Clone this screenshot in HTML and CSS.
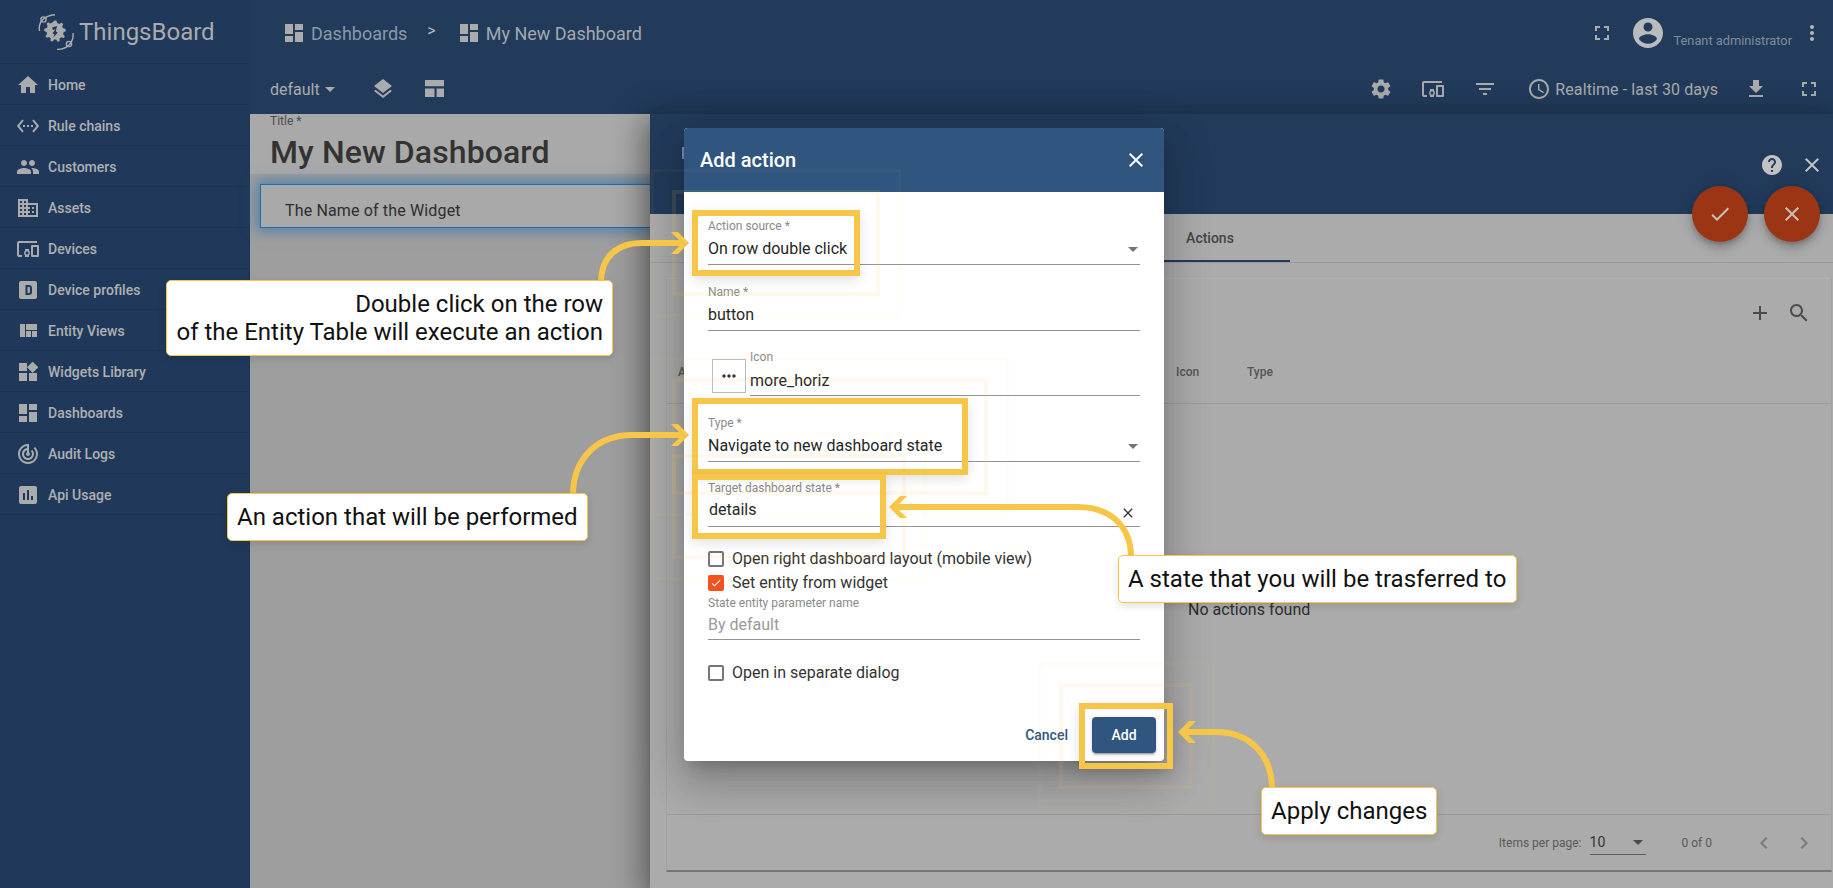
FILE: index.html
```html
<!DOCTYPE html>
<html lang="en">
<head>
<meta charset="utf-8">
<title>ThingsBoard - Add action</title>
<link rel="stylesheet" href="styles.css">
</head>
<body>
<svg class="defs" width="0" height="0" aria-hidden="true">
  <symbol id="i-dash" viewBox="3 3 18 18"><path d="M3 13h8V3H3zm0 8h8v-6H3zm10 0h8V11h-8zm0-18v6h8V3z"/></symbol>
  <symbol id="i-full" viewBox="0 0 24 24"><path d="M7 14H5v5h5v-2H7zm-2-4h2V7h3V5H5zm12 7h-3v2h5v-5h-2zM14 5v2h3v3h2V5z"/></symbol>
  <symbol id="i-devices" viewBox="0 0 24 24"><path d="M3 6h18V4H3c-1.100 0-2 .9-2 2v12c0 1.100.9 2 2 2h3v-2H3zm10 6H9v1.780c-.61.550-1 1.330-1 2.220s.39 1.670 1 2.220V20h4v-1.780c.61-.55 1-1.340 1-2.220s-.39-1.670-1-2.220zm-2 5.500c-.83 0-1.500-.67-1.500-1.500s.67-1.500 1.500-1.500 1.500.67 1.500 1.500-.67 1.500-1.500 1.500zM22 8h-6c-.5 0-1 .5-1 1v10c0 .5.5 1 1 1h6c.5 0 1-.5 1-1V9c0-.5-.5-1-1-1zm-1 10h-4v-8h4z"/></symbol>
  <symbol id="i-close" viewBox="0 0 24 24"><path d="M19 6.410 17.590 5 12 10.590 6.410 5 5 6.410 10.590 12 5 17.590 6.410 19 12 13.410 17.590 19 19 17.590 13.410 12z"/></symbol>
  <symbol id="i-logo" viewBox="0 0 36 36">
    <path class="orbit" d="M1.500 17C0 8 6 1.500 17 .7"/><circle class="orbit" cx="5.500" cy="5.500" r="2.600"/>
    <path class="orbit" d="M35 19C36 28 30 35 19 35.500"/><circle class="orbit" cx="31" cy="30" r="2.600"/>
    <path transform="translate(-1.500 0)" d="M18 6.500l2 .2.800 2.400 2 .8 2.300-1.200 1.600 1.400-1 2.400.9 1.800 2.500.7.200 2.200-2.300 1-.4 2.100 1.800 1.900-1.200 1.800-2.500-.7-1.600 1.300.1 2.600-2.100.6-1.400-2.200-2.100-.1-1.500 2.100-2.100-.7.200-2.600-1.700-1.300-2.400.8-1.200-1.900 1.700-1.900-.5-2.100-2.400-.9.100-2.200 2.500-.8.800-1.900-1.100-2.300 1.600-1.500 2.300 1.100 1.900-.9z"/>
    <path class="bolt" transform="translate(-1.500 0)" d="M20.500 12l-5 1.500 1 2.500 2.500-.8-3 4 1.800 1-1 3.300 4.500-5-2-1z"/>
  </symbol>
</svg>

<div class="app">
  <aside class="sidebar">
    <div class="logo">
      <svg class="logo-icon"><use href="#i-logo"/></svg>
      <span>ThingsBoard</span>
    </div>
    <nav class="menu">
      <a class="menu-item"><svg class="mi" viewBox="0 0 24 24"><path d="M10 20v-6h4v6h5v-8h3L12 3 2 12h3v8z"/></svg>Home</a>
      <a class="menu-item"><svg class="mi" viewBox="0 0 24 24"><path d="M7.770 6.760 6.230 5.480.830 12l5.400 6.520 1.540-1.280L3.420 12zM7 13h2v-2H7zm10-2h-2v2h2zm-6 2h2v-2h-2zm6.770-7.520-1.540 1.280L20.580 12l-4.350 5.240 1.540 1.280L23.170 12z"/></svg>Rule chains</a>
      <a class="menu-item"><svg class="mi" viewBox="0 0 24 24"><path d="M16 11c1.660 0 2.990-1.340 2.990-3S17.660 5 16 5s-3 1.340-3 3 1.340 3 3 3zm-8 0c1.660 0 2.990-1.340 2.990-3S9.660 5 8 5 5 6.340 5 8s1.340 3 3 3zm0 2c-2.330 0-7 1.170-7 3.500V19h14v-2.500C15 14.170 10.330 13 8 13zm8 0c-.29 0-.62.020-.97.050C16.190 13.890 17 15.020 17 16.500V19h6v-2.500c0-2.330-4.670-3.500-7-3.500z"/></svg>Customers</a>
      <a class="menu-item"><svg class="mi" viewBox="0 0 24 24"><path d="M12 7V3H2v18h20V7zM6 19H4v-2h2zm0-4H4v-2h2zm0-4H4V9h2zm0-4H4V5h2zm4 12H8v-2h2zm0-4H8v-2h2zm0-4H8V9h2zm0-4H8V5h2zm10 12h-8v-2h2v-2h-2v-2h2v-2h-2V9h8zm-2-8h-2v2h2zm0 4h-2v2h2z"/></svg>Assets</a>
      <a class="menu-item"><svg class="mi"><use href="#i-devices"/></svg>Devices</a>
      <a class="menu-item"><svg class="mi" viewBox="0 0 24 24"><path fill-rule="evenodd" d="M5 3h14c1.100 0 2 .9 2 2v14c0 1.100-.9 2-2 2H5c-1.100 0-2-.9-2-2V5c0-1.100.9-2 2-2zm4.500 4v10H13c1.700 0 3-1.300 3-3v-4c0-1.700-1.300-3-3-3zm2 2H13c.5 0 .9.400.9 1v4c0 .6-.4 1-.9 1h-1.500z"/></svg>Device profiles</a>
      <a class="menu-item"><svg class="mi" viewBox="0 0 24 24"><path d="M10 18h5v-6h-5zm-6 0h5V5H4zm12 0h5v-6h-5zM10 5v6h11V5z"/></svg>Entity Views</a>
      <a class="menu-item"><svg class="mi" viewBox="0 0 24 24"><path d="M13 13v8h8v-8zM3 21h8v-8H3zM3 3v8h8V3zm13.660-1.310L11 7.340 16.660 13l5.660-5.660z"/></svg>Widgets Library</a>
      <a class="menu-item"><svg class="mi" viewBox="0 0 24 24"><path d="M3 13h8V3H3zm0 8h8v-6H3zm10 0h8V11h-8zm0-18v6h8V3z"/></svg>Dashboards</a>
      <a class="menu-item"><svg class="mi" viewBox="0 0 24 24"><path d="M19.070 4.930l-1.410 1.410C19.100 7.790 20 9.790 20 12c0 4.420-3.580 8-8 8s-8-3.580-8-8c0-4.080 3.050-7.440 7-7.930v2.020C8.160 6.570 6 9.030 6 12c0 3.310 2.690 6 6 6s6-2.690 6-6c0-1.660-.67-3.160-1.760-4.240l-1.410 1.410C15.550 9.900 16 10.900 16 12c0 2.210-1.790 4-4 4s-4-1.790-4-4c0-1.860 1.280-3.410 3-3.860v2.140c-.6.350-1 .98-1 1.720 0 1.100.9 2 2 2s2-.9 2-2c0-.74-.4-1.380-1-1.720V2h-1C6.480 2 2 6.480 2 12s4.480 10 10 10 10-4.480 10-10c0-2.760-1.120-5.260-2.930-7.070z"/></svg>Audit Logs</a>
      <a class="menu-item"><svg class="mi" viewBox="0 0 24 24"><path d="M19 3H5c-1.100 0-2 .9-2 2v14c0 1.100.9 2 2 2h14c1.100 0 2-.9 2-2V5c0-1.100-.9-2-2-2zM9 17H7v-7h2zm4 0h-2V7h2zm4 0h-2v-4h2z"/></svg>Api Usage</a>
    </nav>
  </aside>

  <div class="main">
    <header class="topbar">
      <div class="crumbs">
        <svg class="crumb-icon"><use href="#i-dash"/></svg>
        <span class="crumb crumb-dim">Dashboards</span>
        <span class="crumb-sep">&gt;</span>
        <svg class="crumb-icon"><use href="#i-dash"/></svg>
        <span class="crumb">My New Dashboard</span>
      </div>
      <div class="user">
        <svg class="ico18"><use href="#i-full"/></svg>
        <svg class="avatar" viewBox="2 2 20 20"><path d="M12 2C6.480 2 2 6.480 2 12s4.480 10 10 10 10-4.480 10-10S17.520 2 12 2zm0 3c1.660 0 3 1.340 3 3s-1.340 3-3 3-3-1.340-3-3 1.340-3 3-3zm0 14.200c-2.500 0-4.710-1.280-6-3.220.030-1.990 4-3.080 6-3.080 1.990 0 5.970 1.090 6 3.080-1.290 1.940-3.500 3.220-6 3.220z"/></svg>
        <span class="role">Tenant administrator</span>
        <svg class="more" viewBox="0 0 24 24"><path d="M12 8c1.100 0 2-.9 2-2s-.9-2-2-2-2 .9-2 2 .9 2 2 2zm0 2c-1.100 0-2 .9-2 2s.9 2 2 2 2-.9 2-2-.9-2-2-2zm0 6c-1.100 0-2 .9-2 2s.9 2 2 2 2-.9 2-2-.9-2-2-2z"/></svg>
      </div>
    </header>

    <div class="toolbar">
      <div class="tools-left">
        <span class="state">default<i class="caret"></i></span>
        <svg class="ico24 t-layers" viewBox="0 0 24 24"><path d="m11.990 18.540-7.370-5.730L3 14.070l9 7 9-7-1.630-1.270zM12 16l7.360-5.730L21 9l-9-7-9 7 1.630 1.270z"/></svg>
        <svg class="ico24 t-layout" viewBox="3 3 18 18"><path d="M3 3h18v6H3zM3 11h9v8H3zM14 11h7v8h-7z"/></svg>
      </div>
      <div class="tools-right">
        <svg class="ico24 t-gear" viewBox="0 0 24 24"><path d="M19.140 12.940c.04-.3.060-.61.060-.94 0-.32-.020-.64-.070-.94l2.030-1.580c.18-.14.230-.41.120-.61l-1.920-3.320c-.12-.22-.37-.29-.59-.22l-2.390.96c-.5-.38-1.030-.7-1.620-.94l-.36-2.540c-.04-.24-.24-.41-.48-.41h-3.840c-.24 0-.43.170-.47.41l-.36 2.540c-.59.240-1.130.570-1.620.94l-2.390-.96c-.22-.08-.47 0-.59.220L2.740 8.870c-.12.210-.08.470.12.610l2.030 1.580c-.05.3-.09.630-.09.940s.020.640.070.940l-2.030 1.580c-.18.140-.23.410-.12.610l1.920 3.320c.12.220.37.290.59.220l2.390-.96c.5.380 1.030.7 1.620.94l.36 2.540c.05.240.24.410.48.410h3.840c.24 0 .44-.17.470-.41l.36-2.540c.59-.24 1.130-.56 1.620-.94l2.390.96c.22.080.47 0 .59-.22l1.920-3.320c.12-.22.070-.47-.12-.61zM12 15.600c-1.980 0-3.600-1.620-3.600-3.600s1.620-3.600 3.600-3.600 3.600 1.620 3.600 3.600-1.620 3.600-3.600 3.600z"/></svg>
        <svg class="ico24 t-dev"><use href="#i-devices"/></svg>
        <svg class="ico24 t-filter" viewBox="0 0 24 24"><path d="M10 18h4v-2h-4zM3 6v2h18V6zm3 7h12v-2H6z"/></svg>
        <svg class="ico24 t-clock" viewBox="0 0 24 24"><path d="M11.990 2C6.470 2 2 6.480 2 12s4.470 10 9.990 10C17.520 22 22 17.520 22 12S17.520 2 11.990 2zM12 20c-4.420 0-8-3.580-8-8s3.580-8 8-8 8 3.580 8 8-3.580 8-8 8zm.5-13H11v6l5.250 3.150.75-1.230-4.500-2.670z"/></svg>
        <span class="realtime">Realtime - last 30 days</span>
        <svg class="ico24 t-down" viewBox="0 0 24 24"><path d="M19 9h-4V3H9v6H5l7 7zM5 18v2h14v-2z"/></svg>
        <svg class="ico24 t-full"><use href="#i-full"/></svg>
      </div>
    </div>

    <div class="content">
      <section class="board">
        <div class="board-title">
          <label class="title-label">Title *</label>
          <div class="title-value">My New Dashboard</div>
        </div>
        <div class="widget-card">The Name of the Widget</div>
      </section>

      <section class="panel">
        <div class="panel-head">
          <i class="panel-mark"></i>
          <div class="panel-actions">
            <svg class="ico24" viewBox="0 0 24 24"><path d="M12 2C6.480 2 2 6.480 2 12s4.480 10 10 10 10-4.480 10-10S17.520 2 12 2zm1 17h-2v-2h2zm2.070-7.750-.9.920C13.450 12.900 13 13.500 13 15h-2v-.5c0-1.100.45-2.100 1.170-2.830l1.240-1.260c.37-.36.590-.86.590-1.410 0-1.100-.9-2-2-2s-2 .9-2 2H8c0-2.210 1.790-4 4-4s4 1.790 4 4c0 .88-.36 1.680-.93 2.250z"/></svg>
            <svg class="ico24"><use href="#i-close"/></svg>
          </div>
          <div class="fabs">
            <span class="fab"><svg viewBox="0 0 24 24"><path d="M9 16.170 4.830 12l-1.420 1.410L9 19 21 7l-1.410-1.410z"/></svg></span>
            <span class="fab"><svg><use href="#i-close"/></svg></span>
          </div>
        </div>
        <div class="tabs"><span class="tab">Actions</span></div>
        <div class="table-card">
          <div class="table-top">
            <svg class="ico24" viewBox="0 0 24 24"><path d="M19 13h-6v6h-2v-6H5v-2h6V5h2v6h6z"/></svg>
            <svg class="ico24" viewBox="0 0 24 24"><path d="M15.500 14h-.79l-.28-.27C15.410 12.590 16 11.110 16 9.500 16 5.910 13.090 3 9.500 3S3 5.910 3 9.500 5.910 16 9.500 16c1.610 0 3.090-.59 4.230-1.570l.27.280v.79l5 4.990L20.490 19zm-6 0C7.010 14 5 11.990 5 9.500S7.010 5 9.500 5 14 7.010 14 9.500 11.990 14 9.500 14z"/></svg>
          </div>
          <div class="table-header">
            <span class="th-a">A</span>
            <span class="th-icon">Icon</span>
            <span class="th-type">Type</span>
          </div>
          <div class="table-empty">No actions found</div>
          <div class="table-foot">
            <span class="per-page">Items per page:</span>
            <span class="per-select">10<i class="caret"></i></span>
            <span class="range">0 of 0</span>
            <svg class="ico24" viewBox="0 0 24 24"><path d="M15.410 7.410 14 6l-6 6 6 6 1.410-1.410L10.830 12z"/></svg>
            <svg class="ico24" viewBox="0 0 24 24"><path d="M10 6 8.590 7.410 13.170 12l-4.580 4.590L10 18l6-6z"/></svg>
          </div>
        </div>
      </section>
    </div>
  </div>
</div>

<div class="dialog">
  <div class="dialog-head">
    <h2>Add action</h2>
    <svg class="dialog-close"><use href="#i-close"/></svg>
  </div>
  <div class="dialog-body">
    <div class="field f-source"><label>Action source *</label><div class="val">On row double click<i class="caret"></i></div></div>
    <div class="field f-name"><label>Name *</label><div class="val">button</div></div>
    <div class="icon-row">
      <span class="icon-btn"><svg viewBox="0 0 24 24"><path d="M6 10c-1.100 0-2 .9-2 2s.9 2 2 2 2-.9 2-2-.9-2-2-2zm12 0c-1.100 0-2 .9-2 2s.9 2 2 2 2-.9 2-2-.9-2-2-2zm-6 0c-1.100 0-2 .9-2 2s.9 2 2 2 2-.9 2-2-.9-2-2-2z"/></svg></span>
      <div class="field f-icon"><label>Icon</label><div class="val">more_horiz</div></div>
    </div>
    <div class="field f-type"><label>Type *</label><div class="val">Navigate to new dashboard state<i class="caret"></i></div></div>
    <div class="field f-target"><label>Target dashboard state *</label><div class="val val-target">details<svg class="clear"><use href="#i-close"/></svg></div></div>
    <div class="check c-right"><i class="box"></i>Open right dashboard layout (mobile view)</div>
    <div class="check c-set"><i class="box on"><svg viewBox="0 0 24 24"><path d="M9 16.170 4.830 12l-1.420 1.410L9 19 21 7l-1.410-1.410z"/></svg></i>Set entity from widget</div>
    <div class="field f-param"><label>State entity parameter name</label><div class="val val-ph">By default</div></div>
    <div class="check c-sep"><i class="box"></i>Open in separate dialog</div>
  </div>
  <div class="dialog-foot">
    <span class="btn-cancel">Cancel</span>
    <span class="btn-add">Add</span>
  </div>
</div>

<div class="hl hl-source"></div>
<div class="hl hl-type"></div>
<div class="hl hl-target"></div>
<div class="hl hl-add"></div>

<svg class="arrows" width="1833" height="888" viewBox="0 0 1833 888" aria-hidden="true">
  <path class="a-line" d="M601 282C601 258 616 243 642 243L684 243"/>
  <path class="a-head" d="M671 232h7l11 11-11 11h-7l11-11z"/>
  <path class="a-line" d="M573 495C573 458 598 435 632 435L684 435"/>
  <path class="a-head" d="M671 424h7l11 11-11 11h-7l11-11z"/>
  <path class="a-line" d="M1131 557C1131 526 1110 507 1078 507L895 507"/>
  <path class="a-head" d="M907 496h-7l-11 11 11 11h7l-11-11z"/>
  <path class="a-line" d="M1272 789C1272 755 1250 732 1216 732L1184 732"/>
  <path class="a-head" d="M1196 721h-7l-11 11 11 11h7l-11-11z"/>
</svg>

<div class="note n-click">Double click on the row<br>of the Entity Table will execute an action</div>
<div class="note n-action">An action that will be performed</div>
<div class="note n-state">A state that you will be trasferred to</div>
<div class="note n-apply">Apply changes</div>
</body>
</html>
```

FILE: styles.css
```css
* { box-sizing: border-box; }
html, body { margin: 0; height: 100%; overflow: hidden; }
body { font-family: Roboto, "Liberation Sans", sans-serif; color: #2a2a2a; background: #a0a0a0; }
.defs { position: absolute; }
svg { display: block; fill: currentColor; }
i { display: block; font-style: normal; }

.app { display: flex; width: 1833px; height: 888px; }

/* sidebar */
.sidebar { width: 250px; flex: none; background: #20395a; border-right: 1px solid #1e3654; color: #aeb0b2; }
.logo { height: 64px; display: flex; align-items: center; padding: 0 0 0 38px; border-bottom: 1px solid #1c3350; color: #a9abad; font-size: 24px; }
.logo-icon { width: 36px; height: 36px; margin-right: 5px; }
.orbit { fill: none; stroke: #a9abad; stroke-width: 1.400; }
.bolt { fill: #20395a; }
.menu-item { height: 41px; display: flex; align-items: center; padding: 1px 0 0 16px; font-size: 14px; font-weight: 500; border-bottom: 1px solid #1c3350; }
.mi { width: 24px; height: 24px; margin-right: 8px; color: #a9abad; }

.main { flex: 1; min-width: 0; display: flex; flex-direction: column; background: #223b5b; color: #a9abad; }

/* top */
.topbar { height: 64px; flex: none; display: flex; justify-content: space-between; align-items: center; padding: 2px 0 0 35px; }
.crumbs { display: flex; align-items: center; font-size: 18px; }
.crumb-icon { width: 18px; height: 18px; margin-right: 8px; }
.crumb { color: #a3a8ae; }
.crumb-dim { color: #8d98a6; }
.crumb-sep { margin: -6px 24px 0 20px; font-size: 16px; color: #b5b7b9; }
.user { display: flex; align-items: center; height: 100%; }
.ico18 { width: 24px; height: 24px; }
.user .ico18 { margin-right: 19px; }
.avatar { width: 30px; height: 30px; margin-right: 11px; color: #b9bbbd; }
.role { font-size: 12.800px; color: #7f8d9e; margin: 14px 8px 0 0; }
.more { width: 24px; height: 24px; margin-right: 9px; color: #b5b7b9; }

.toolbar { height: 50px; flex: none; display: flex; justify-content: space-between; align-items: center; padding: 0 12px 0 20px; }
.tools-left, .tools-right { display: flex; align-items: center; }
.state { display: flex; align-items: center; font-size: 16px; width: 101px; color: #a9abad; }
.state .caret { margin-left: 5px; }
.caret { width: 0; height: 0; border-left: 5px solid transparent; border-right: 5px solid transparent; border-top: 5px solid #a9abad; }
.ico24 { width: 24px; height: 24px; flex: none; }
.t-layers { margin-right: 30px; }
.t-layout { margin-left: 0; width: 19px; height: 19px; }
.t-gear { margin-right: 28px; }
.t-dev { margin-right: 28px; }
.t-filter { margin-right: 30px; }
.t-clock { margin-right: 4px; }
.realtime { font-size: 16px; letter-spacing: .1px; margin-right: 26px; }
.t-down { margin-right: 29px; }

/* content */
.content { flex: 1; min-height: 0; display: flex; }
.board { width: 400px; flex: none; background: #9e9e9e; }
.board-title { height: 60px; background: #a9a9a9; padding: 1px 0 0 20px; }
.title-label { display: block; font-size: 12px; line-height: 12px; color: #4c4c4c; }
.title-value { font-size: 32px; line-height: 42px; margin-top: 4px; font-weight: 500; letter-spacing: .1px; color: #333; }
.widget-card { margin: 10px 0 0 10px; height: 44px; line-height: 52px; padding-left: 24px; font-size: 16px; letter-spacing: .15px; color: #2e2e2e; background: #a9a9a9; border: 1px solid #1e6eae; border-right: 0; box-shadow: 0 0 12px 4px rgba(30,110,174,.55); }

.panel { flex: 1; min-width: 0; display: flex; flex-direction: column; background: #ababab; box-shadow: 0 8px 10px -5px rgba(0,0,0,.2), 0 16px 24px 2px rgba(0,0,0,.14), -4px 6px 30px 5px rgba(0,0,0,.3); position: relative; }
.panel-head { height: 100px; flex: none; position: relative; background: #223b5b; color: #b0b2b4; }
.panel-mark { position: absolute; left: 32px; top: 33px; width: 2px; height: 12px; background: #7f8ea3; }
.panel-actions { position: absolute; right: 9px; top: 39px; display: flex; gap: 16px; color: #c2c2c2; }
.fabs { position: absolute; right: 13px; top: 72px; display: flex; gap: 16px; }
.fab { width: 56px; height: 56px; border-radius: 50%; background: #9c3514; color: #c9c0bc; display: flex; align-items: center; justify-content: center; box-shadow: 0 3px 5px -1px rgba(0,0,0,.2), 0 6px 10px 0 rgba(0,0,0,.14), 0 1px 18px 0 rgba(0,0,0,.12); }
.fab svg { width: 24px; height: 24px; }
.tabs { height: 49px; flex: none; position: relative; border-bottom: 1px solid #9b9b9b; }
.tab { position: absolute; left: 480px; width: 160px; height: 48px; border-bottom: 2px solid #223b5b; text-align: center; line-height: 48px; font-size: 14px; font-weight: 500; color: #444; }
.table-card { margin: 15px 1px 16px 16px; flex: 1; min-height: 0; display: flex; flex-direction: column; border: 1px solid #a2a2a2; border-bottom: 2px solid #767676; border-top-color: #b0b0b0; }
.table-top { height: 68px; flex: none; display: flex; justify-content: flex-end; align-items: center; gap: 15px; padding: 0 20px 0 0; color: #4b4b4b; }
.table-header { height: 57px; flex: none; position: relative; font-size: 12px; font-weight: 500; color: #555; border-bottom: 1px solid #9b9b9b; }
.table-header span { position: absolute; top: 18px; }
.th-a { left: 11px; }
.th-icon { left: 509px; }
.th-type { left: 580px; }
.table-empty { flex: 1; min-height: 0; padding: 196px 0 0 521px; font-size: 16px; color: #2e2e2e; }
.table-foot { height: 56px; flex: none; display: flex; align-items: center; justify-content: flex-end; font-size: 12px; color: #595959; padding-right: 15px; border-top: 1px solid #9b9b9b; }
.per-page { margin-right: 8px; }
.per-select { width: 56px; height: 24px; display: flex; align-items: center; justify-content: space-between; font-size: 14px; color: #333; border-bottom: 1px solid #5d5d5d; padding-right: 3px; }
.per-select .caret { border-top-color: #4b4b4b; }
.range { margin: 0 40px 0 36px; }
.table-foot .ico24 { color: #7a7a7a; margin-left: 16px; }
.table-foot .ico24:first-of-type { margin-left: 0; }

/* dialog */
.dialog { position: absolute; left: 684px; top: 128px; width: 480px; height: 633px; background: #fff; border-radius: 4px; box-shadow: 0 11px 15px -7px rgba(0,0,0,.2), 0 24px 38px 3px rgba(0,0,0,.14), 0 9px 46px 8px rgba(0,0,0,.12); display: flex; flex-direction: column; }
.dialog-head { height: 64px; flex: none; display: flex; justify-content: space-between; align-items: center; padding: 0 16px; background: #305680; color: #fff; border-radius: 4px 4px 0 0; }
.dialog-head h2 { margin: 0; font-size: 20px; font-weight: 500; }
.dialog-close { width: 24px; height: 24px; }
.dialog-body { flex: 1; position: relative; min-height: 0; }
.field { position: absolute; left: 24px; width: 432px; padding-top: 1px; border-bottom: 1px solid #949494; }
.field label { display: block; font-size: 12px; line-height: 14px; color: #8a8a8a; }
.val { font-size: 16px; line-height: 20px; height: 20px; margin-top: 6px; display: flex; justify-content: space-between; align-items: center; color: #262626; }
.val .caret { border-top-color: #757575; margin-right: 2px; }
.f-source { top: 26px; height: 47px; }
.f-name { top: 92px; height: 47px; }
.icon-row { position: absolute; left: 28px; top: 167px; }
.icon-btn { display: flex; align-items: center; justify-content: center; width: 34px; height: 34px; border: 1px solid #bdbdbd; color: #333; }
.icon-btn svg { width: 20px; height: 20px; }
.f-icon { left: 38px; top: -10px; width: 390px; height: 47px; }
.f-icon .val { margin-top: 7px; }
.f-type { top: 223px; height: 47px; }
.f-target { top: 288px; height: 47px; }
.val-target { padding-left: 1px; margin-top: 5px; }
.clear { width: 16px; height: 16px; margin: 6px 4px 0 0; color: #333; }
.check { position: absolute; left: 24px; display: flex; align-items: center; font-size: 16px; line-height: 16px; color: #333; }
.box { width: 16px; height: 16px; margin-right: 8px; border: 2px solid #757575; border-radius: 2px; }
.box.on { background: #f4511e; border-color: #f4511e; color: #fff; }
.box.on svg { width: 12px; height: 12px; }
.c-right { top: 359px; }
.c-set { top: 383px; }
.f-param { top: 403px; height: 45px; }
.f-param .val { margin-top: 5px; }
.val-ph { color: #9a9a9a; }
.c-sep { top: 473px; }
.dialog-foot { height: 61px; flex: none; display: flex; align-items: flex-start; justify-content: flex-end; padding: 17px 8px 0 0; font-size: 14px; font-weight: 500; }
.btn-cancel { color: #305680; line-height: 36px; margin-right: 24px; }
.btn-add { width: 64px; height: 36px; line-height: 36px; text-align: center; background: #305680; color: #fff; border-radius: 4px; box-shadow: 0 3px 1px -2px rgba(0,0,0,.2), 0 2px 2px 0 rgba(0,0,0,.14), 0 1px 5px 0 rgba(0,0,0,.12); }

/* highlights */
.hl { position: absolute; border: 6px solid #f5c647; box-shadow: 0 4px 12px rgba(0,0,0,.12); }
.hl::before, .hl::after { content: ""; position: absolute; border-style: solid; }
.hl::before { inset: -26px; border-width: 4px; border-color: rgba(245,198,71,.1); }
.hl::after { inset: -47px; border-width: 3px; border-color: rgba(245,198,71,.04); }
.hl-source { left: 692px; top: 210px; width: 168px; height: 66px; }
.hl-type { left: 692px; top: 398px; width: 276px; height: 77px; }
.hl-target { left: 692px; top: 474px; width: 194px; height: 65px; }
.hl-add { left: 1079px; top: 703px; width: 94px; height: 66px; }

.arrows { position: absolute; left: 0; top: 0; }
.a-line { fill: none; stroke: #f5c647; stroke-width: 6; }
.a-head { fill: #f5c647; }

/* notes */
.note { position: absolute; background: #fff; border: 1px solid #f5c647; border-radius: 5px; color: #111; font-size: 24px; line-height: 28px; box-shadow: 0 3px 8px rgba(0,0,0,.12); white-space: nowrap; padding: 9px 9px; }
.n-click { left: 166px; top: 280px; width: 447px; height: 76px; text-align: right; }
.n-action { left: 227px; top: 493px; width: 361px; height: 48px; }
.n-state { left: 1118px; top: 555px; width: 399px; height: 48px; }
.n-apply { left: 1261px; top: 787px; width: 176px; height: 48px; }
```
